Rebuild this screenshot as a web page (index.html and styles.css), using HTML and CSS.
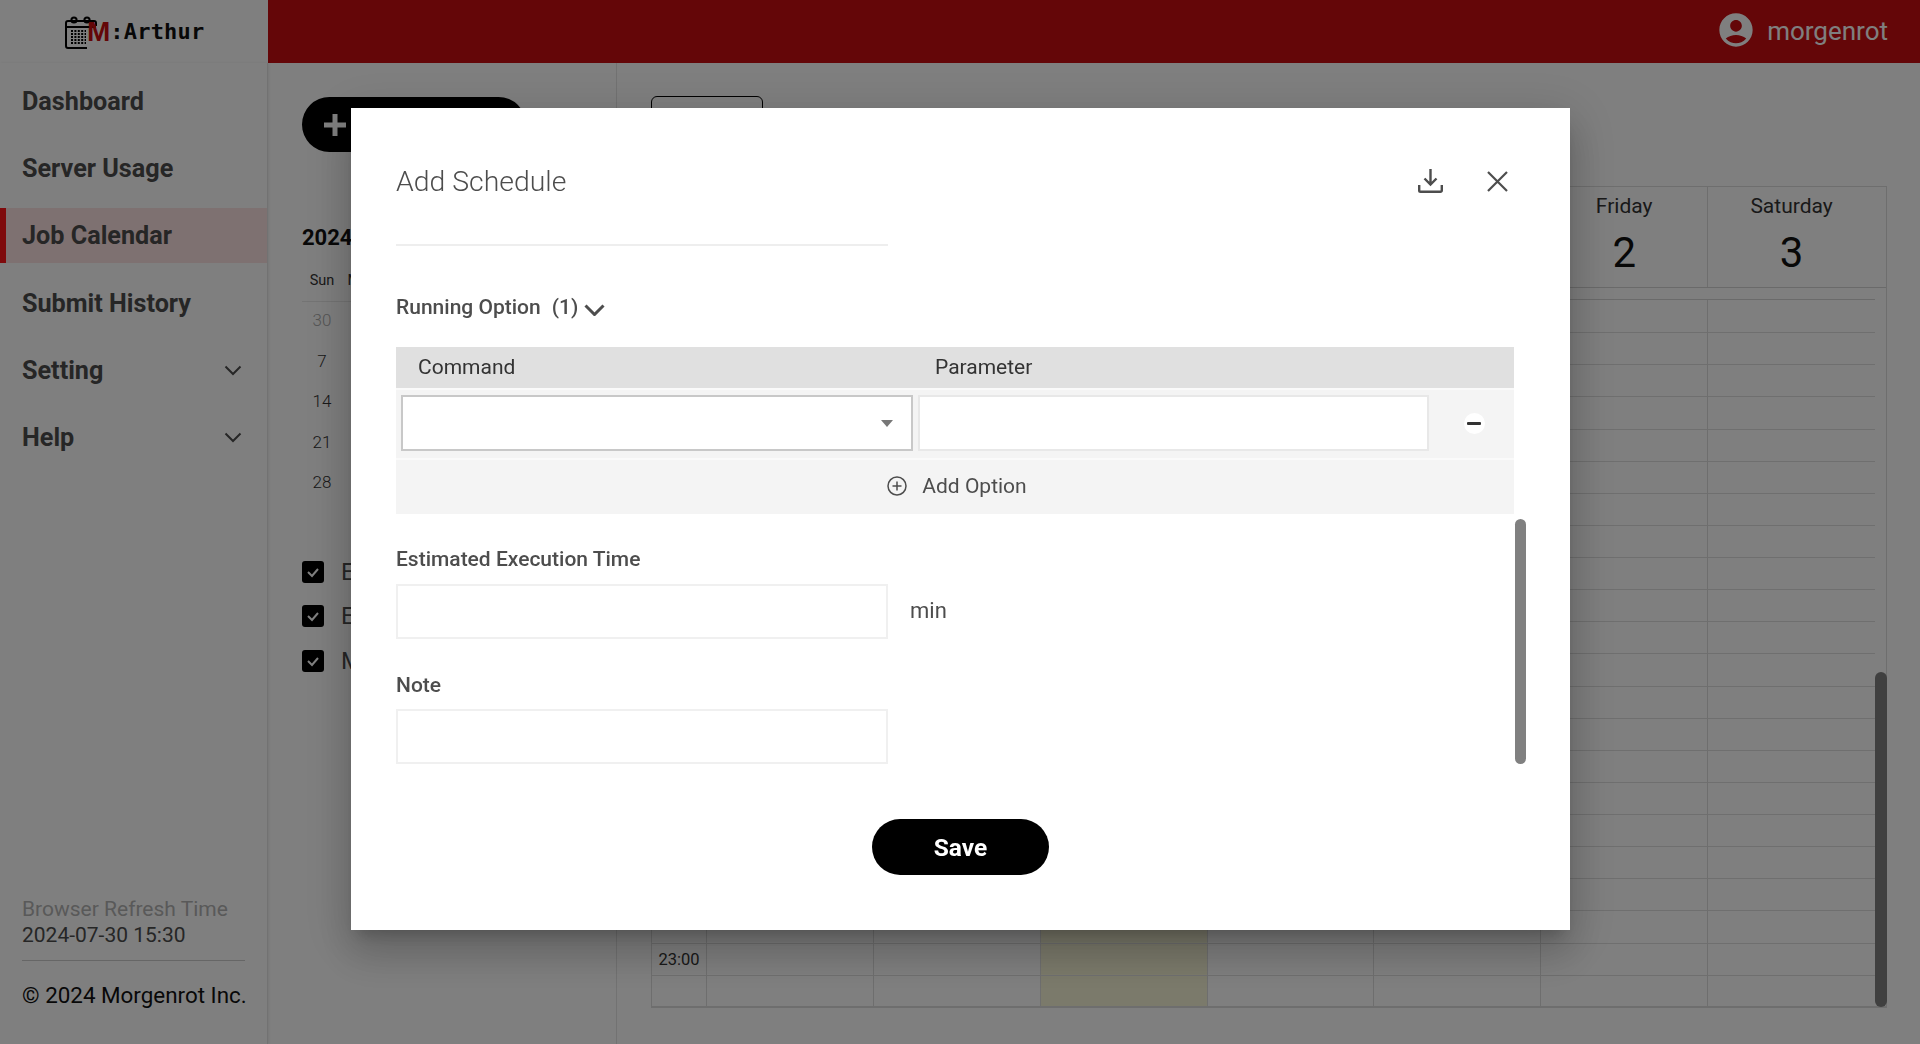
FILE: index.html
```html
<!DOCTYPE html>
<html lang="en">
<head>
    <meta charset="UTF-8">
    <meta name="viewport" content="width=device-width, initial-scale=1.0">
    <title>Job Calendar - M:Arthur</title>
    <link rel="stylesheet" href="styles.css">
</head>
<body>
    <header class="topbar">
        <div class="logo">
            <svg class="logo-icon" viewBox="0 0 32 33" fill="none" stroke="#000" stroke-width="2">
                <path d="M22 32H3a2 2 0 0 1-2-2V7a2 2 0 0 1 2-2h26a2 2 0 0 1 2 2v3"/>
                <path d="M1 11h30"/>
                <circle cx="9" cy="4" r="2.6"/>
                <circle cx="22" cy="4" r="2.6"/>
                <path d="M6 15h15M6 18h15M6 21h15M6 24h15M6 27h15" stroke-width="2" stroke-dasharray="2 1.4"/>
            </svg>
            <span class="logo-m">M</span><span class="logo-name">:Arthur</span>
        </div>
        <div class="topbar-fill">
            <svg class="user-icon" viewBox="0 0 24 24" fill="#fff"><path d="M12 2C6.48 2 2 6.48 2 12s4.48 10 10 10 10-4.48 10-10S17.52 2 12 2zm0 4c1.93 0 3.5 1.57 3.5 3.5S13.93 13 12 13s-3.5-1.57-3.5-3.5S10.07 6 12 6zm0 14c-2.03 0-4.43-.82-6.14-2.88C7.55 15.8 9.68 15 12 15s4.45.8 6.14 2.12C16.43 19.18 14.03 20 12 20z"/></svg>
            <span class="user-name">morgenrot</span>
        </div>
    </header>

    <div class="layout">
        <nav class="sidebar">
            <a class="nav-item">Dashboard</a>
            <a class="nav-item">Server Usage</a>
            <a class="nav-item active">Job Calendar</a>
            <a class="nav-item">Submit History</a>
            <a class="nav-item">Setting
                <svg class="nav-arrow" viewBox="0 0 18 11" fill="none" stroke="#4d4d4d" stroke-width="2"><path d="M1.5 1.500 9 9l7.500-7.500"/></svg>
            </a>
            <a class="nav-item">Help
                <svg class="nav-arrow" viewBox="0 0 18 11" fill="none" stroke="#4d4d4d" stroke-width="2"><path d="M1.5 1.500 9 9l7.500-7.500"/></svg>
            </a>
            <div class="sidebar-footer">
                <div class="refresh-label">Browser Refresh Time</div>
                <div class="refresh-time">2024-07-30 15:30</div>
                <div class="copyright">© 2024 Morgenrot Inc.</div>
            </div>
        </nav>

        <section class="side-panel">
            <button class="add-button">
                <svg class="add-plus" viewBox="0 0 22 22" fill="none" stroke="#fff" stroke-width="5"><path d="M11 0v22M0 11h22"/></svg>
                Add Schedule
            </button>
            <div class="month-title">2024/07</div>
            <div class="mini-cal">
                <span class="mini-head">Sun</span><span class="mini-head">Mon</span><span class="mini-head">Tue</span><span class="mini-head">Wed</span><span class="mini-head">Thu</span><span class="mini-head">Fri</span><span class="mini-head">Sat</span>
                <span class="dim">30</span><span>1</span><span>2</span><span>3</span><span>4</span><span>5</span><span>6</span>
                <span>7</span><span>8</span><span>9</span><span>10</span><span>11</span><span>12</span><span>13</span>
                <span>14</span><span>15</span><span>16</span><span>17</span><span>18</span><span>19</span><span>20</span>
                <span>21</span><span>22</span><span>23</span><span>24</span><span>25</span><span>26</span><span>27</span>
                <span>28</span><span>29</span><span>30</span><span>31</span><span class="dim">1</span><span class="dim">2</span><span class="dim">3</span>
            </div>
            <div class="check-list">
                <div class="check-row"><span class="check-box"><svg viewBox="0 0 22 22" fill="none" stroke="#fff" stroke-width="2"><path d="M6 11l4 4 6-7"/></svg></span>Exec</div>
                <div class="check-row"><span class="check-box"><svg viewBox="0 0 22 22" fill="none" stroke="#fff" stroke-width="2"><path d="M6 11l4 4 6-7"/></svg></span>Est</div>
                <div class="check-row"><span class="check-box"><svg viewBox="0 0 22 22" fill="none" stroke="#fff" stroke-width="2"><path d="M6 11l4 4 6-7"/></svg></span>Main</div>
            </div>
        </section>

        <main class="calendar">
            <button class="week-tab">Week</button>
            <div class="week-grid">
                <div class="week-head">
                    <div class="time-head"></div>
                    <div class="day-head">Sunday<b>28</b></div>
                    <div class="day-head">Monday<b>29</b></div>
                    <div class="day-head">Tuesday<b>30</b></div>
                    <div class="day-head">Wednesday<b>31</b></div>
                    <div class="day-head">Thursday<b>1</b></div>
                    <div class="day-head">Friday<b>2</b></div>
                    <div class="day-head">Saturday<b>3</b></div>
                </div>
                <div class="all-day"></div>
                <div class="week-body">
                    <div class="time-col"><span class="time-label">23:00</span></div>
                    <div class="day-col"></div>
                    <div class="day-col"></div>
                    <div class="day-col today"></div>
                    <div class="day-col"></div>
                    <div class="day-col"></div>
                    <div class="day-col"></div>
                    <div class="day-col"></div>
                </div>
                <div class="week-scroll"></div>
            </div>
        </main>
    </div>

    <!-- Add Schedule dialog -->
    <div class="overlay">
        <div class="modal">
            <div class="modal-head">
                <h2>Add Schedule</h2>
                <svg class="icon-download" viewBox="0 0 25 24" fill="none" stroke="#4d4d4d" stroke-width="2.4"><path d="M12.5 0v15M6.5 9.500l6 6 6-6"/><path d="M1.2 16v5.500a1.300 1.300 0 0 0 1.300 1.300h20a1.300 1.300 0 0 0 1.300-1.300V16"/></svg>
                <svg class="icon-close" viewBox="0 0 21 21" fill="none" stroke="#4d4d4d" stroke-width="2.2"><path d="M1 1l19 19M20 1 1 20"/></svg>
            </div>
            <div class="input-stub"></div>

            <div class="section-title">Running Option<span class="section-count">(1)</span>
                <svg class="section-arrow" viewBox="0 0 21 12" fill="none" stroke="#4d4d4d" stroke-width="3"><path d="M1.500 1.500l9 9 9-9"/></svg>
            </div>

            <div class="option-table">
                <div class="option-head">
                    <span class="col-command">Command</span>
                    <span>Parameter</span>
                </div>
                <div class="option-row">
                    <div class="select-box"><span class="select-caret"></span></div>
                    <div class="param-box"></div>
                    <div class="remove-wrap"><span class="remove-btn"></span></div>
                </div>
                <div class="option-add">
                    <svg class="add-circle" viewBox="0 0 20 20" fill="none" stroke="#4d4d4d" stroke-width="1.5"><circle cx="10" cy="10" r="9"/><path d="M10 5.500v9M5.500 10h9"/></svg>
                    Add Option
                </div>
            </div>

            <label class="field-label first">Estimated Execution Time</label>
            <div class="field-row">
                <div class="text-box"></div>
                <span class="field-unit">min</span>
            </div>

            <label class="field-label">Note</label>
            <div class="text-box note"></div>

            <button class="save-button">Save</button>
            <div class="modal-scroll"></div>
        </div>
    </div>
</body>
</html>
```

FILE: styles.css
```css
* {
    box-sizing: border-box;
}

html, body {
    height: 100%;
}

body {
    font-family: Roboto, "Liberation Sans", sans-serif;
    background-color: #fff;
    color: #4d4d4d;
    margin: 0;
    overflow: hidden;
    display: flex;
    flex-direction: column;
}

/* Top bar */
.topbar {
    display: flex;
    height: 63px;
    flex-shrink: 0;
}

.logo {
    width: 268px;
    display: flex;
    align-items: center;
    padding-left: 65px;
    background-color: #fff;
}

.logo-icon {
    width: 32px;
    height: 33px;
    margin-top: 1px;
}

.logo-m {
    font-family: "Liberation Sans", sans-serif;
    font-weight: 700;
    font-size: 28px;
    color: #c80c10;
    margin-left: -10px;
}

.logo-name {
    font-family: "DejaVu Sans Mono", monospace;
    font-weight: 700;
    font-size: 22px;
    letter-spacing: 0.2px;
    color: #111;
}

.topbar-fill {
    flex: 1;
    display: flex;
    align-items: center;
    justify-content: flex-end;
    padding-right: 32px;
    background-color: #c80c10;
}

.user-icon {
    width: 40px;
    height: 40px;
    margin-bottom: 4px;
}

.user-name {
    color: #fff;
    font-size: 26px;
    margin: 0 0 2px 11px;
}

/* Page columns */
.layout {
    flex: 1;
    display: flex;
    min-height: 0;
}

.sidebar {
    width: 268px;
    display: flex;
    flex-direction: column;
    gap: 12.2px;
    padding-top: 11px;
    border-right: 1px solid #e4e4e4;
    box-shadow: 1px 0 3px rgba(0, 0, 0, 0.08);
}

.nav-item {
    display: flex;
    align-items: center;
    justify-content: space-between;
    height: 55px;
    flex-shrink: 0;
    padding: 0 25px 0 22px;
    font-size: 25.2px;
    font-weight: 700;
    color: #4d4d4d;
}

.nav-item.active {
    background-color: #fde3e3;
    box-shadow: inset 6px 0 0 #ff1419;
}

.nav-arrow {
    width: 18px;
    height: 11px;
}

.sidebar-footer {
    margin-top: auto;
    padding: 0 22px 35px;
    font-size: 21px;
    line-height: 27px;
}

.refresh-label {
    color: #b3b3b3;
}

.refresh-time {
    line-height: 25px;
    padding-bottom: 12px;
    border-bottom: 1px solid #ccc;
}

.copyright {
    margin-top: 21px;
    font-size: 22.4px;
    color: #111;
    white-space: nowrap;
}

/* Left panel */
.side-panel {
    width: 349px;
    padding: 34px 0 0 34px;
    border-right: 1px solid #e4e4e4;
}

.add-button {
    display: flex;
    align-items: center;
    width: 224px;
    height: 55px;
    padding: 0 22px;
    border: none;
    border-radius: 28px;
    background-color: #000;
    color: #fff;
    font-family: inherit;
    font-size: 22px;
    font-weight: 700;
    white-space: nowrap;
}

.add-plus {
    width: 22px;
    height: 22px;
    margin-right: 10px;
}

.month-title {
    margin-top: 73px;
    font-size: 22px;
    font-weight: 700;
    line-height: 26px;
    color: #111;
}

.mini-cal {
    display: grid;
    grid-template-columns: repeat(7, 40px);
    grid-template-rows: 30px repeat(5, 40.5px);
    margin-top: 21px;
    font-size: 17px;
    font-weight: 300;
    color: #333;
    text-align: center;
}

.mini-cal span {
    line-height: 37px;
}

.mini-cal .mini-head {
    line-height: 17px;
    font-size: 14.5px;
    font-weight: 400;
    border-bottom: 1px solid #e8e8e8;
}

.mini-cal .dim {
    color: #aaa;
}

.check-list {
    display: flex;
    flex-direction: column;
    gap: 22.5px;
    margin-top: 56px;
}

.check-row {
    display: flex;
    align-items: center;
    gap: 17px;
    height: 22px;
    font-size: 24px;
    color: #4d4d4d;
}

.check-box {
    width: 22px;
    height: 22px;
    border-radius: 3px;
    background-color: #000;
}

.check-box svg {
    display: block;
}

/* Week calendar */
.calendar {
    flex: 1;
    padding: 33px 33px 0 34px;
    min-width: 0;
}

.week-tab {
    display: block;
    width: 112px;
    height: 48px;
    border: 1px solid #000;
    border-radius: 6px;
    background-color: #fff;
    font-family: inherit;
    font-size: 20px;
}

.week-grid {
    position: relative;
    margin-top: 42px;
    height: 822px;
    border: 1px solid #ddd;
    border-bottom-width: 2px;
}

.week-head {
    display: flex;
    height: 101px;
    padding-right: 11px;
    border-bottom: 1px solid #d4d4d4;
}

.time-head {
    width: 55px;
    border-right: 1px solid #ddd;
}

.day-head {
    width: 167px;
    padding-top: 6px;
    border-right: 1px solid #ddd;
    font-size: 21px;
    line-height: 26px;
    color: #333;
    text-align: center;
}

.day-head:last-child {
    border-right: none;
}

.day-head b {
    display: block;
    margin-top: 10px;
    font-size: 42px;
    font-weight: 400;
    line-height: 48px;
    color: #111;
}

.all-day {
    height: 12px;
    margin-right: 11px;
    border-bottom: 1px solid #d4d4d4;
}

.week-body {
    display: flex;
    height: 706px;
    padding-right: 11px;
}

.time-col,
.day-col {
    border-right: 1px solid #ddd;
    background-image: repeating-linear-gradient(to bottom, transparent 0, transparent 31.13px, #dedede 31.13px, #dedede 32.13px);
    background-position: 0 1px;
}

.time-col {
    width: 55px;
    display: flex;
    align-items: flex-end;
    justify-content: center;
    padding-bottom: 36px;
}

.day-col {
    width: 167px;
}

.day-col:last-child {
    border-right: none;
}

.day-col.today {
    background-color: #f6f4d6;
}

.time-label {
    font-size: 16.5px;
    line-height: 20px;
    color: #333;
}

.week-scroll {
    position: absolute;
    right: -1px;
    bottom: -1px;
    width: 12px;
    height: 335px;
    border-radius: 6px;
    background-color: #808080;
}

/* Add Schedule dialog */
.overlay {
    position: fixed;
    inset: 0;
    display: flex;
    justify-content: center;
    align-items: flex-start;
    padding-top: 108px;
    padding-left: 1px;
    background-color: rgba(0, 0, 0, 0.5);
}

.modal {
    position: relative;
    width: 1219px;
    height: 822px;
    padding: 50px 56px 0 45px;
    background-color: #fff;
    box-shadow: 0 11px 15px -7px rgba(0, 0, 0, 0.2), 0 24px 38px 3px rgba(0, 0, 0, 0.14), 0 9px 46px 8px rgba(0, 0, 0, 0.12);
}

.modal-head {
    display: flex;
    align-items: center;
    height: 46px;
}

.modal-head h2 {
    flex: 1;
    margin: 0;
    font-size: 28.4px;
    font-weight: 300;
    color: #4d4d4d;
}

.icon-download {
    width: 25px;
    height: 24px;
    margin-right: 44px;
}

.icon-close {
    width: 21px;
    height: 21px;
    margin-right: 6px;
}

.input-stub {
    width: 492px;
    height: 42px;
    border-bottom: 2px solid #eee;
}

.section-title {
    display: flex;
    align-items: center;
    height: 28px;
    margin-top: 47px;
    font-size: 21px;
    font-weight: 500;
    color: #4d4d4d;
}

.section-count {
    margin-left: 11px;
}

.section-arrow {
    width: 21px;
    height: 12px;
    margin: 5px 0 0 6px;
}

.option-table {
    margin-top: 26px;
    font-size: 21px;
    color: #4d4d4d;
}

.option-head {
    display: flex;
    align-items: center;
    height: 41px;
    padding: 0 0 2px 22px;
    background-color: #e0e0e0;
    color: #333;
}

.col-command {
    width: 517px;
}

.option-row {
    display: flex;
    align-items: center;
    gap: 5px;
    height: 70px;
    padding: 0 5px 2px;
    border-top: 2px solid #fafafa;
    background-color: #f4f4f4;
}

.select-box {
    display: flex;
    align-items: center;
    justify-content: flex-end;
    width: 512px;
    height: 56px;
    padding-right: 18px;
    border: 2px solid #c8c8c8;
    background-color: #fff;
}

.select-caret {
    width: 0;
    height: 0;
    border-left: 6.5px solid transparent;
    border-right: 6.5px solid transparent;
    border-top: 7px solid #777;
}

.param-box {
    width: 511px;
    height: 56px;
    border: 2px solid #e8e8e8;
    background-color: #fff;
}

.remove-wrap {
    flex: 1;
    display: flex;
    justify-content: center;
    padding-left: 5px;
}

.remove-btn {
    display: flex;
    align-items: center;
    justify-content: center;
    width: 21px;
    height: 21px;
    border-radius: 50%;
    background-color: #fff;
}

.remove-btn::before {
    content: "";
    width: 14px;
    height: 3px;
    border-radius: 1px;
    background-color: #333;
}

.option-add {
    display: flex;
    align-items: center;
    justify-content: center;
    height: 56px;
    padding: 0 0 2px 4px;
    border-top: 2px solid #fafafa;
    background-color: #f4f4f4;
}

.add-circle {
    width: 20px;
    height: 20px;
    margin-right: 15px;
}

.field-label {
    display: block;
    height: 24px;
    margin-top: 35px;
    font-size: 21px;
    font-weight: 500;
    line-height: 22px;
    color: #4d4d4d;
}

.field-label.first {
    margin-top: 34px;
}

.field-row {
    display: flex;
    align-items: center;
    gap: 22px;
    margin-top: 12px;
}

.text-box {
    width: 492px;
    height: 55px;
    border: 2px solid #f0f0f0;
    background-color: #fff;
}

.text-box.note {
    margin-top: 11px;
}

.field-unit {
    padding-bottom: 2px;
    font-size: 22px;
    color: #4d4d4d;
}

.save-button {
    display: block;
    width: 177px;
    height: 56px;
    margin: 55px 0 0 476px;
    border: none;
    border-radius: 28px;
    background-color: #000;
    color: #fff;
    font-family: inherit;
    font-size: 24.5px;
    font-weight: 700;
}

.modal-scroll {
    position: absolute;
    top: 411px;
    right: 44px;
    width: 11px;
    height: 245px;
    border-radius: 6px;
    background-color: #808080;
}
```
